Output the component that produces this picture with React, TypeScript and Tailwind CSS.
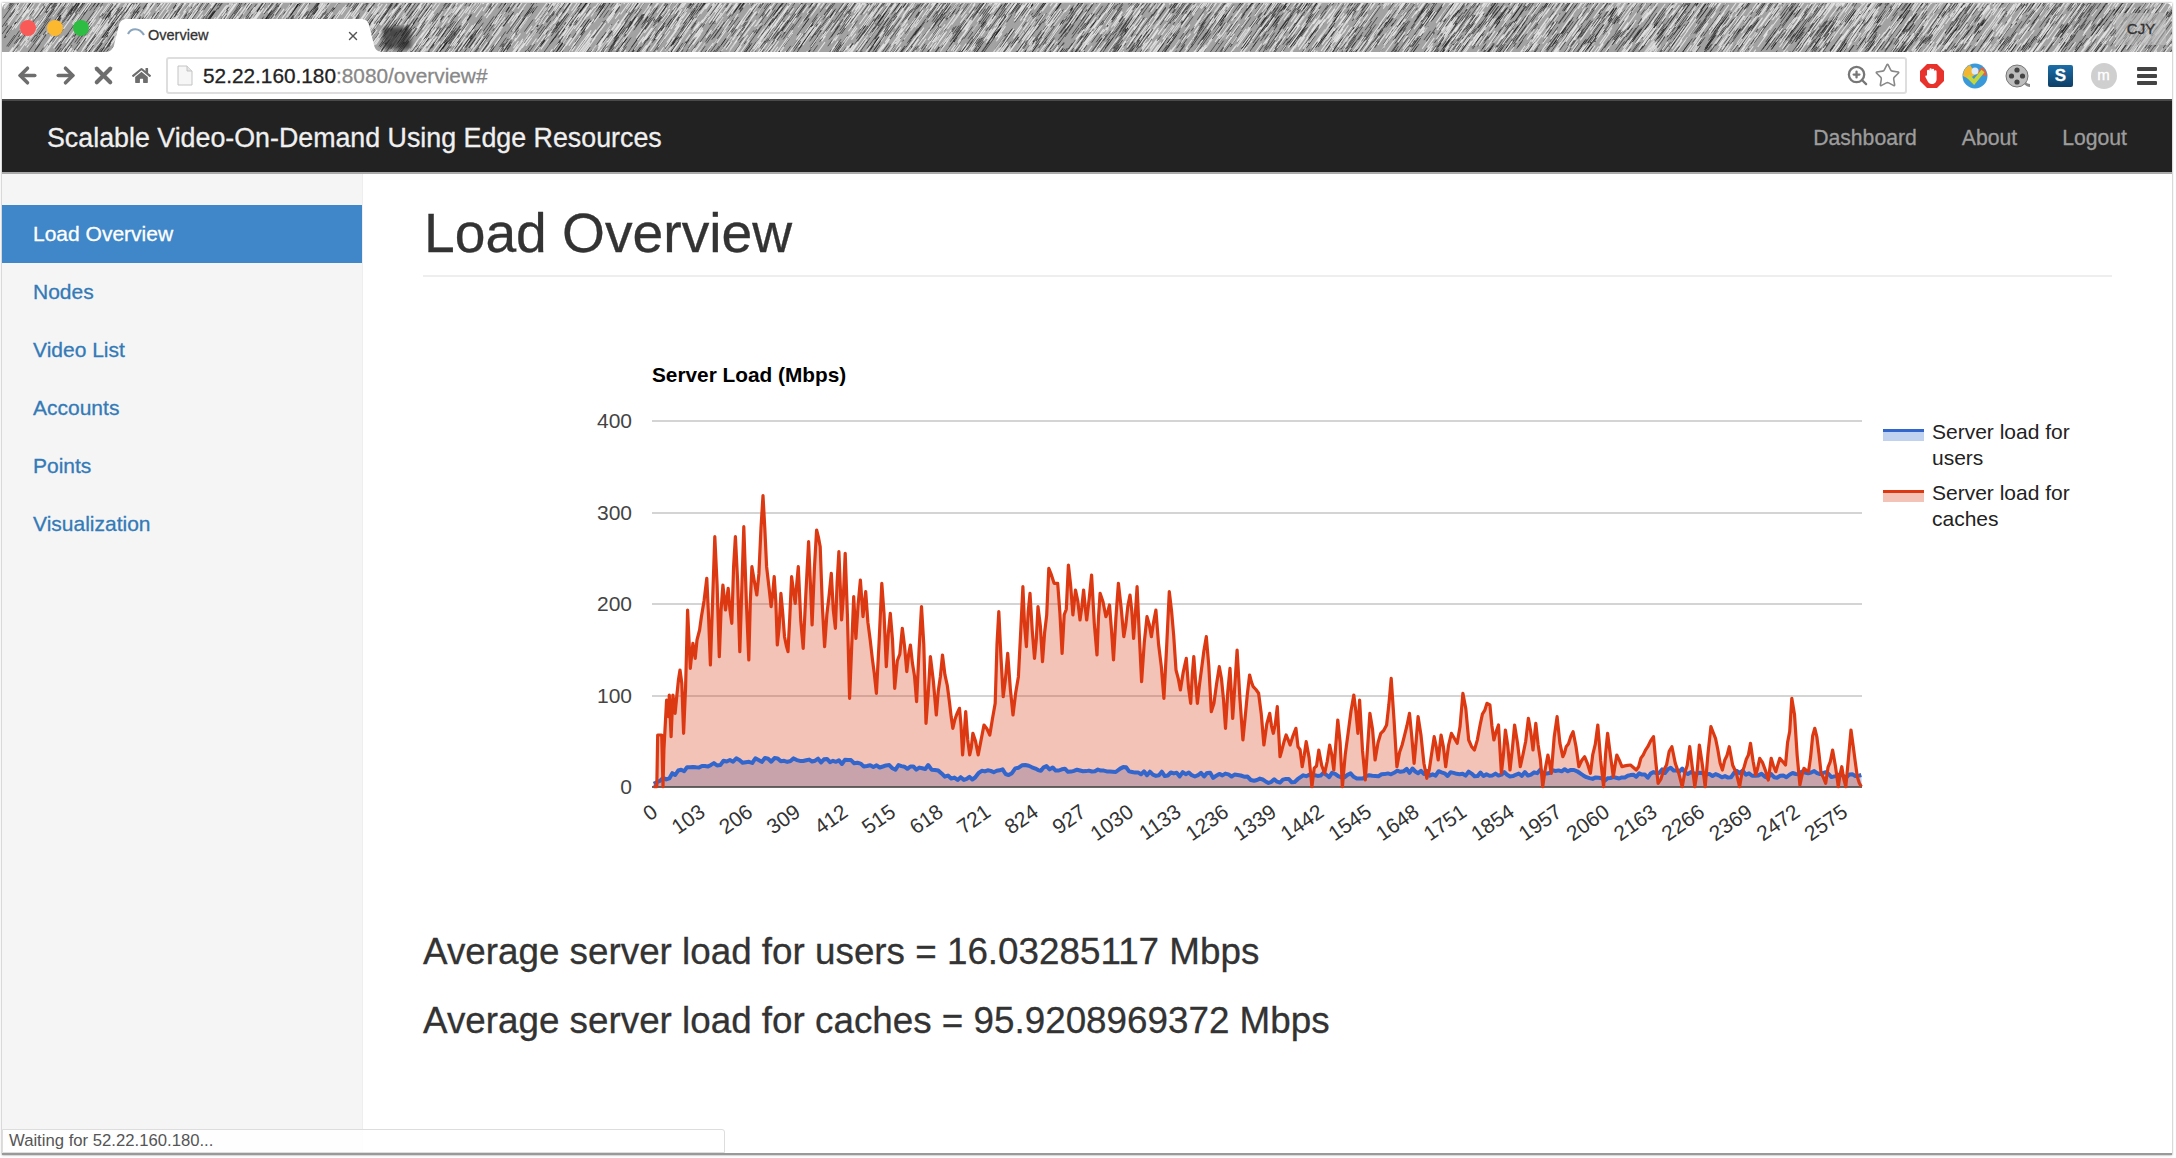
import { ArrowLeft, ArrowRight, X, Star, ZoomIn } from 'lucide-react';
import { FaHome } from 'react-icons/fa';

// ── seeded noise for the title bar texture and the chart series ──────

function makeRandom(seed: number) {
  let s = seed;
  return () => {
    s = (s * 1664525 + 1013904223) % 4294967296;
    return s / 4294967296;
  };
}

function scribble(seed: number, count: number) {
  const rnd = makeRandom(seed);
  let d = '';
  for (let i = 0; i < count; i++) {
    const x = rnd() * 2190;
    const y = rnd() * 60;
    const len = 5 + rnd() * 14;
    d += `M${x.toFixed(1)} ${y.toFixed(1)}l${(len * 0.72).toFixed(1)} ${(-len).toFixed(1)}`;
  }
  return d;
}

const DARK_STROKES = scribble(7, 3800);
const LIGHT_STROKES = scribble(23, 2800);

// ── chart data, traced from the reference (x px, y px in crop units) ─

const RED_LEFT = [
  165,1310,172,1310,174,1155,183,1155,186,1310,188,1200,194,1050,198,1100,200,1035,204,1160,208,1035,213,1090,217,1035,224,960,228,1000,232,1150,241,780,247,955,253,880,258,925,262,870,268,840,272,800,284,685,292,945,302,560,312,920,320,705,326,780,332,715,340,820,348,560,358,905,367,530,378,930,385,650,390,690,396,735,410,437,418,650,424,720,428,770,435,680,442,885,450,730,458,860,466,905,474,680,482,760,489,650,500,895,512,575,520,825,530,540,538,590,548,890,563,670,572,835,580,605,586,810,594,610,604,1045,613,740,618,865,628,690,634,800,640,725,650,870,664,1030,676,700,686,950,695,790,705,1015,722,835,732,965,740,885,754,1055,765,770,775,1120,785,920,798,1095,812,915,828,1060,835,1135,850,1075,857,1215,864,1085,873,1215,880,1150,892,1215,905,1125,918,1155,930,1060,938,785,948,1040,958,910,970,1095,982,980,992,710,1000,890,1008,730,1018,925,1026,770,1036,935,1050,655,1062,700,1070,700,1080,910,1094,645,1104,795,1110,720,1120,810,1128,720,1135,810,1146,675,1158,915,1165,730,1178,800,1186,765,1195,930,1206,700,1218,860,1232,735,1240,865,1248,710,1258,995,1270,800,1280,860,1290,780,1308,1045,1320,725,1335,960,1345,1020,1358,925,1368,1060,1375,920,1383,1060,1392,960,1403,860,1414,1085,1432,950,1446,1135,1456,955,1462,1105,1472,900,1485,1170,1500,975,1508,1010,1520,1030,1532,1185,1545,1090,1553,1150,1562,1070,1568,1220,
];

const RED_RIGHT = [
  150,1155,157,1185,167,1135,178,1250,185,1175,195,1310,207,1200,217,1270,226,1185,233,1260,240,1110,248,1310,258,1150,268,1035,275,1150,278,1050,288,1290,296,1090,305,1230,315,1150,325,1125,333,985,343,1250,352,1185,365,1090,373,1240,380,1100,395,1285,408,1160,415,1230,420,1155,428,1250,438,1150,448,1180,458,1030,468,1170,478,1200,488,1125,500,1060,505,1065,512,1170,520,1125,525,1270,532,1140,540,1260,548,1125,558,1250,572,1105,580,1200,585,1120,597,1310,606,1215,612,1270,622,1100,632,1220,638,1190,650,1145,660,1250,670,1220,680,1270,693,1125,703,1310,710,1150,720,1280,726,1215,735,1250,750,1245,760,1260,772,1215,780,1190,790,1160,798,1300,808,1260,822,1190,840,1310,853,1190,862,1310,870,1185,880,1310,890,1130,898,1165,910,1260,922,1190,940,1310,948,1250,959,1180,968,1275,975,1225,990,1290,995,1225,1003,1265,1010,1225,1020,1245,1031,1045,1045,1305,1052,1255,1060,1265,1071,1135,1082,1270,1090,1300,1102,1200,1112,1310,1118,1250,1125,1310,1134,1140,1145,1280,1152,1310,
];

const BLUE_LEFT = [
  165,1305,200,1280,240,1255,300,1245,350,1232,400,1232,450,1228,500,1232,600,1235,650,1250,700,1252,780,1252,810,1272,860,1288,885,1285,900,1262,940,1260,960,1272,990,1248,1020,1262,1045,1250,1100,1265,1160,1262,1200,1262,1210,1252,1250,1270,1350,1272,1480,1280,1510,1290,1568,1293,
];

const BLUE_RIGHT = [
  165,1295,180,1272,230,1275,300,1280,360,1260,400,1270,520,1272,550,1275,630,1258,700,1288,730,1288,750,1270,780,1280,820,1255,860,1270,920,1280,940,1265,1000,1280,1070,1262,1100,1280,1152,1275,
];

type Pt = [number, number];

function toPoints(flat: number[], x0: number, sx: number): Pt[] {
  const out: Pt[] = [];
  for (let i = 0; i < flat.length; i += 2) {
    out.push([x0 + flat[i] / sx, 350 + flat[i + 1] / 3]);
  }
  return out;
}

// roughen the traced red line a little: the source has ~2600 samples
function roughenRed(pts: Pt[]): Pt[] {
  const rnd = makeRandom(5);
  const out: Pt[] = [];
  for (let i = 0; i < pts.length - 1; i++) {
    const [ax, ay] = pts[i];
    const [bx, by] = pts[i + 1];
    out.push(pts[i]);
    const extra = bx - ax > 6 ? 2 : bx - ax > 3 ? 1 : 0;
    for (let k = 1; k <= extra; k++) {
      const t = k / (extra + 1);
      const wob = (rnd() - 0.5) * Math.abs(by - ay) * 0.35;
      out.push([ax + (bx - ax) * t, Math.min(787, ay + (by - ay) * t + wob)]);
    }
  }
  out.push(pts[pts.length - 1]);
  return out;
}

const RED: Pt[] = roughenRed([...toPoints(RED_LEFT, 580, 2.24), ...toPoints(RED_RIGHT, 1200, 1.742)]);

function jitterBlue(): Pt[] {
  const anchors = [...toPoints(BLUE_LEFT, 580, 2.24), ...toPoints(BLUE_RIGHT, 1200, 1.742)];
  const rnd = makeRandom(11);
  const out: Pt[] = [];
  for (let i = 0; i < anchors.length - 1; i++) {
    const [ax, ay] = anchors[i];
    const [bx, by] = anchors[i + 1];
    const steps = Math.max(1, Math.round((bx - ax) / 3));
    for (let k = 0; k < steps; k++) {
      const t = k / steps;
      out.push([ax + (bx - ax) * t, ay + (by - ay) * t + (rnd() - 0.5) * 5]);
    }
  }
  out.push(anchors[anchors.length - 1]);
  return out.map(([x, y]) => [x, Math.min(y, 786)] as Pt);
}

const BLUE = jitterBlue();

const line = (pts: Pt[]) => pts.map(([x, y]) => `${x.toFixed(1)},${y.toFixed(1)}`).join(' ');
const area = (pts: Pt[]) => `652,787 ${line(pts)} 1862,787`;

const GRID = [
  { label: '400', y: 421 },
  { label: '300', y: 513 },
  { label: '200', y: 604 },
  { label: '100', y: 696 },
  { label: '0', y: 787 },
];

const X_LABELS = Array.from({ length: 26 }, (_, i) => i * 103);

const SIDEBAR = ['Nodes', 'Video List', 'Accounts', 'Points', 'Visualization'];

// ── chart ────────────────────────────────────────────────────────────

function LoadChart() {
  return (
    <svg
      viewBox="423 300 1689 580"
      width={1689}
      height={580}
      className="block [-webkit-text-stroke:0]"
      style={{ fontFamily: '"Liberation Sans", Arial, sans-serif' }}
    >
      <text x={652} y={382} fontSize={20.8} fontWeight={700} fill="#000">Server Load (Mbps)</text>
      {GRID.map((g) => (
        <g key={g.label}>
          <line x1={652} x2={1862} y1={g.y} y2={g.y} stroke="#d4d4d4" strokeWidth={2} />
          <text x={632} y={g.y + 7} textAnchor="end" fontSize={21} fill="#444">{g.label}</text>
        </g>
      ))}
      <polygon points={area(BLUE)} fill="#3366cc" fillOpacity={0.3} />
      <polygon points={area(RED)} fill="#dc3912" fillOpacity={0.3} />
      <line x1={652} x2={1862} y1={787} y2={787} stroke="#444" strokeWidth={1.5} />
      <polyline points={line(BLUE)} fill="none" stroke="#3366cc" strokeWidth={4} strokeLinejoin="round" />
      <polyline points={line(RED)} fill="none" stroke="#dc3912" strokeWidth={3.2} strokeLinejoin="round" />
      {X_LABELS.map((v, i) => {
        const x = 659 + i * 47.6;
        return (
          <text key={v} x={x} y={815} textAnchor="end" fontSize={21} fill="#333" transform={`rotate(-35 ${x} 815)`}>{v}</text>
        );
      })}
      <rect x={1883} y={429} width={41} height={12} fill="#3366cc" fillOpacity={0.3} />
      <rect x={1883} y={429} width={41} height={3} fill="#3366cc" />
      <text x={1932} y={439} fontSize={21} fill="#222">Server load for</text>
      <text x={1932} y={465} fontSize={21} fill="#222">users</text>
      <rect x={1883} y={490} width={41} height={12} fill="#dc3912" fillOpacity={0.3} />
      <rect x={1883} y={490} width={41} height={3} fill="#dc3912" />
      <text x={1932} y={500} fontSize={21} fill="#222">Server load for</text>
      <text x={1932} y={526} fontSize={21} fill="#222">caches</text>
    </svg>
  );
}

// ── browser chrome ───────────────────────────────────────────────────

function ExtensionIcons() {
  return (
    <div className="flex items-center">
      <div className="w-[43px] flex justify-center">
        <svg width={26} height={26} viewBox="0 0 26 26">
          <polygon points="8,1 18,1 25,8 25,18 18,25 8,25 1,18 1,8" fill="#e8322c" />
          <path d="M8 13V8a1.2 1.2 0 0 1 2.4 0V6.5a1.2 1.2 0 0 1 2.4 0V7a1.2 1.2 0 0 1 2.4 0v1.5a1.2 1.2 0 0 1 2.4 0V16c0 3-2 5-4.8 5-2.4 0-3.6-1.4-4.8-4l-1.6-3c-.6-1.2 1-2 1.8-1z" fill="#fff" />
        </svg>
      </div>
      <div className="w-[43px] flex justify-center">
        <svg width={26} height={26} viewBox="0 0 26 26">
          <circle cx={13} cy={13} r={12.5} fill="#3a9ad9" />
          <path d="M1 13A12 12 0 0 1 8 2l6 9-7 5z" fill="#f2b632" />
          <path d="M25 13a12 12 0 0 0-5-9l-6 7z" fill="#e8603c" />
          <circle cx={13} cy={8} r={3.5} fill="#dbeafa" />
          <path d="M6 13l6 6 9-11" fill="none" stroke="#c6d63a" strokeWidth={4} />
        </svg>
      </div>
      <div className="w-[43px] flex justify-center">
        <svg width={26} height={26} viewBox="0 0 26 26">
          <circle cx={12} cy={13} r={11} fill="#bdbdbd" stroke="#777" strokeWidth={1} />
          <circle cx={12} cy={7} r={2.6} fill="#444" />
          <circle cx={12} cy={19} r={2.6} fill="#444" />
          <circle cx={6.5} cy={13} r={2.6} fill="#444" />
          <circle cx={17.5} cy={13} r={2.6} fill="#444" />
          <path d="M19 21c2 2 4 3 6 3v-3c-2 0-3-1-4-2z" fill="#888" />
        </svg>
      </div>
      <div className="w-[43px] flex justify-center">
        <div className="w-[25px] h-[22px] rounded-[2px] bg-gradient-to-b from-[#1b6ea8] to-[#0d3f66] flex items-center justify-center text-white text-[17px] font-bold leading-none">S</div>
      </div>
      <div className="w-[43px] flex justify-center">
        <div className="w-[26px] h-[26px] rounded-full bg-[#cfcfcf] flex items-center justify-center text-white text-[15px] leading-none pb-[2px]">m</div>
      </div>
      <div className="w-[43px] flex flex-col items-center gap-[3px]">
        <div className="w-[20px] h-[4px] rounded-[1px] bg-[#444]" />
        <div className="w-[20px] h-[4px] rounded-[1px] bg-[#444]" />
        <div className="w-[20px] h-[4px] rounded-[1px] bg-[#444]" />
      </div>
    </div>
  );
}

function TitleBar() {
  return (
    <div className="relative h-[49px] shrink-0 overflow-hidden rounded-t-[6px] bg-[#a2a2a2]">
      <svg className="absolute inset-0 blur-[0.4px]" width={2170} height={49}>
        <path d={DARK_STROKES} stroke="#181818" strokeWidth={0.9} strokeOpacity={0.65} fill="none" />
        <path d={LIGHT_STROKES} stroke="#f6f6f6" strokeWidth={1.1} strokeOpacity={0.75} fill="none" />
      </svg>
      <div className="absolute left-[381px] top-[24px] w-[28px] h-[22px] rounded-[3px] bg-[#222]/70 blur-[2px]" />
      <div className="absolute right-[6px] top-[10px] w-[50px] h-[32px] bg-[#bdbdbd]/60 flex items-center justify-center text-[15px] text-[#333]">CJY</div>
      <div className="relative flex items-end h-full">
        <div className="flex items-center gap-[10.5px] pl-[18px] pb-[16px] w-[103px]">
          <div className="w-[16px] h-[16px] shrink-0 rounded-full bg-[#fa5a57]" />
          <div className="w-[16px] h-[16px] shrink-0 rounded-full bg-[#fcb82f]" />
          <div className="w-[16px] h-[16px] shrink-0 rounded-full bg-[#2ebd43]" />
        </div>
        <div className="relative w-[278px] h-[33px] flex items-center">
          <svg className="absolute inset-0" width={278} height={33}>
            <path d="M0 33C6 33 8 30 9 26L14 6C15 2 18 0 22 0H256C260 0 263 2 264 6L269 26C270 30 272 33 278 33Z" fill="#fff" />
          </svg>
          <svg className="relative ml-[21px]" width={20} height={16} viewBox="0 0 20 16">
            <path d="M2 6C5 0 13 -1 18 7" fill="none" stroke="#8aa5bd" strokeWidth={2.2} />
          </svg>
          <span className="relative ml-[2px] text-[14.5px] text-[#333]">Overview</span>
          <X className="absolute left-[241px] top-[10px] w-[14px] h-[14px] text-[#555]" strokeWidth={2.5} />
        </div>
      </div>
    </div>
  );
}

function Toolbar() {
  return (
    <div className="h-[49px] shrink-0 flex items-center bg-white border-b-2 border-[#4a4a4a] pl-[6px] pr-[4px]">
      <div className="flex items-center text-[#6d6d6d]">
        <div className="w-[38px] flex justify-center"><ArrowLeft className="w-[25px] h-[25px]" strokeWidth={3.4} /></div>
        <div className="w-[38px] flex justify-center"><ArrowRight className="w-[25px] h-[25px]" strokeWidth={3.4} /></div>
        <div className="w-[39px] flex justify-center"><X className="w-[27px] h-[27px]" strokeWidth={3.6} /></div>
        <div className="w-[37px] flex justify-center"><FaHome className="w-[19px] h-[19px]" /></div>
      </div>
      <div className="ml-[6px] flex-1 h-[37px] flex items-center rounded-[3px] border-2 border-[#dedede] pl-[9px] pr-[4px]">
        <svg width={16} height={21} viewBox="0 0 16 21">
          <path d="M1 1h9l5 5v14H1z" fill="#f6f6f6" stroke="#c4c4c4" strokeWidth={1} />
          <path d="M10 1v5h5" fill="#e4e4e4" stroke="#c4c4c4" strokeWidth={1} />
        </svg>
        <span className="ml-[10px] text-[20.8px] text-[#222]">52.22.160.180<span className="text-[#888]">:8080/overview#</span></span>
        <ZoomIn className="ml-auto w-[23px] h-[23px] text-[#777]" strokeWidth={2.4} />
        <Star className="ml-[5px] w-[27px] h-[27px] text-[#888]" strokeWidth={1.4} />
      </div>
      <div className="ml-[3px]">
        <ExtensionIcons />
      </div>
    </div>
  );
}

function Navbar() {
  return (
    <div className="h-[73px] shrink-0 flex items-center justify-between bg-[#222] border-b-2 border-[#aaa] pl-[45px] pr-[45px]">
      <span className="text-[26.8px] text-[#f0f0f0] pt-[3px]">Scalable Video-On-Demand Using Edge Resources</span>
      <div className="flex items-center gap-[45px] text-[21.2px] text-[#9d9d9d] pt-[2px]">
        <span>Dashboard</span>
        <span>About</span>
        <span>Logout</span>
      </div>
    </div>
  );
}

function Sidebar() {
  return (
    <div className="w-[361px] shrink-0 bg-[#f5f5f5] border-r border-[#eee] pt-[31px] text-[21px]">
      <div className="h-[58px] flex items-center pl-[31px] bg-[#3f87c8] text-white">Load Overview</div>
      {SIDEBAR.map((item) => (
        <div key={item} className="h-[58px] flex items-center pl-[31px] text-[#337ab7]">{item}</div>
      ))}
    </div>
  );
}

export default function App() {
  return (
    <div
      className="relative w-[2176px] h-[1158px] overflow-hidden bg-white pt-[3px] pl-[2px] pr-[4px] pb-[3px] [-webkit-text-stroke:0.3px]"
      style={{ fontFamily: '"Liberation Sans", Arial, sans-serif' }}
    >
      <div className="relative h-full flex flex-col border-b-2 border-[#999] bg-white shadow-[0_0_2px_#888]">
        <TitleBar />
        <Toolbar />
        <Navbar />
        <div className="flex-1 flex min-h-0">
          <Sidebar />
          <div className="w-[1689px] ml-[60px] min-w-0">
            <div className="h-[103px] border-b-2 border-[#eee] flex items-center">
              <h1 className="text-[55.2px] leading-none font-normal text-[#333] mt-[18px] ml-[1px]">Load Overview</h1>
            </div>
            <div className="h-[23px]" />
            <LoadChart />
            <div className="mt-[52px] text-[36.8px] leading-[40px] text-[#333]">Average server load for users = 16.03285117 Mbps</div>
            <div className="mt-[29px] text-[36.8px] leading-[40px] text-[#333]">Average server load for caches = 95.9208969372 Mbps</div>
          </div>
        </div>
        <div className="absolute left-0 bottom-0 w-[723px] h-[24px] flex items-center pl-[6px] bg-white/90 border border-[#ddd] rounded-tr-[3px] text-[16.7px] text-[#555] [-webkit-text-stroke:0]">
          Waiting for 52.22.160.180...
        </div>
      </div>
    </div>
  );
}
